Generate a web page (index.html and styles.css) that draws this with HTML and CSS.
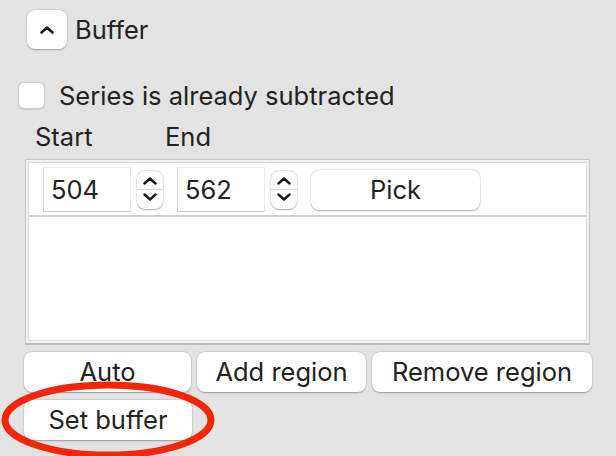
FILE: index.html
```html
<!DOCTYPE html>
<html>
<head>
<meta charset="utf-8">
<link rel="stylesheet" href="styles.css">
</head>
<body>
<div class="panel">
  <div class="disclosure-row">
    <button class="disclosure" aria-label="Collapse">
      <svg width="14" height="8" viewBox="0 0 14 8"><path d="M1.5 6.5 L7 1.5 L12.5 6.5" fill="none" stroke="#1a1a1a" stroke-width="2.6" stroke-linecap="round" stroke-linejoin="round"/></svg>
    </button>
    <span class="title">Buffer</span>
  </div>

  <label class="check-row">
    <span class="checkbox"></span>
    <span class="label">Series is already subtracted</span>
  </label>

  <div class="col-labels">
    <span class="col-start">Start</span>
    <span class="col-end">End</span>
  </div>

  <div class="frame">
    <div class="frame-inner">
      <div class="row">
        <div class="field">504</div>
        <div class="stepper">
          <svg class="chev" width="14" height="8" viewBox="0 0 14 8"><path d="M1.5 6.5 L7 1.5 L12.5 6.5" fill="none" stroke="#1a1a1a" stroke-width="2.4" stroke-linecap="round" stroke-linejoin="round"/></svg>
          <span class="step-sep"></span>
          <svg class="chev" width="14" height="8" viewBox="0 0 14 8"><path d="M1.5 1.5 L7 6.5 L12.5 1.5" fill="none" stroke="#1a1a1a" stroke-width="2.4" stroke-linecap="round" stroke-linejoin="round"/></svg>
        </div>
        <div class="field">562</div>
        <div class="stepper">
          <svg class="chev" width="14" height="8" viewBox="0 0 14 8"><path d="M1.5 6.5 L7 1.5 L12.5 6.5" fill="none" stroke="#1a1a1a" stroke-width="2.4" stroke-linecap="round" stroke-linejoin="round"/></svg>
          <span class="step-sep"></span>
          <svg class="chev" width="14" height="8" viewBox="0 0 14 8"><path d="M1.5 1.5 L7 6.5 L12.5 1.5" fill="none" stroke="#1a1a1a" stroke-width="2.4" stroke-linecap="round" stroke-linejoin="round"/></svg>
        </div>
        <button class="btn pick">Pick</button>
      </div>
    </div>
  </div>

  <div class="actions">
    <button class="btn">Auto</button>
    <button class="btn">Add region</button>
    <button class="btn">Remove region</button>
  </div>

  <div class="set-row">
    <button class="btn set-buffer">Set buffer</button>
  </div>

  <svg class="annotation" width="230" height="90" viewBox="0 0 230 90">
    <ellipse cx="108" cy="42" rx="103" ry="35" fill="none" stroke="#f5250a" stroke-width="7"/>
  </svg>
</div>
</body>
</html>
```

FILE: styles.css
```css
html, body {
  margin: 0;
  padding: 0;
  background: #e3e3e3;
}

body {
  font-family: Inter, "Noto Sans", "Liberation Sans", sans-serif;
  font-size: 25.5px;
  color: #222222;
  width: 616px;
  height: 456px;
  overflow: hidden;
}

.panel {
  position: relative;
  width: 616px;
  height: 456px;
}

button {
  font-family: inherit;
  font-size: inherit;
  color: inherit;
  margin: 0;
  padding: 0;
}

.disclosure-row {
  display: flex;
  align-items: center;
  gap: 8px;
  padding: 10px 0 0 27px;
  height: 39px;
}

.disclosure {
  width: 40px;
  height: 39px;
  border: none;
  border-radius: 8px;
  background: #ffffff;
  box-shadow: 0 0.5px 1.5px rgba(0, 0, 0, 0.28), 0 0 0 0.5px rgba(0, 0, 0, 0.06);
  display: flex;
  align-items: center;
  justify-content: center;
}

.title {
  line-height: 30px;
}

.check-row {
  display: flex;
  align-items: center;
  gap: 14px;
  margin: 33px 0 0 18px;
  height: 27px;
}

.checkbox {
  width: 27px;
  height: 27px;
  box-sizing: border-box;
  border-radius: 6px;
  background: #ffffff;
  border: 1px solid #cfcfcf;
  box-shadow: 0 0.5px 1px rgba(0, 0, 0, 0.12);
}

.label {
  line-height: 30px;
}

.col-labels {
  display: flex;
  height: 30px;
  line-height: 30px;
  margin-top: 13px;
  padding-left: 35px;
}

.col-start {
  width: 130px;
}

.frame {
  margin: 7px 0 0 25px;
  width: 565px;
  height: 186px;
  box-sizing: border-box;
  border: 1px solid #c6c6c6;
  border-bottom: 2px solid #bdbdbd;
  padding: 2px;
  background: #f1f1f1;
}

.frame-inner {
  height: 100%;
  box-sizing: border-box;
  background: #ffffff;
  border: 1px solid #dcdcdc;
}

.row {
  display: flex;
  align-items: center;
  height: 54px;
  box-sizing: border-box;
  border-bottom: 2px solid #cfcfcf;
  padding-left: 14px;
}

.field {
  width: 88px;
  height: 45px;
  box-sizing: border-box;
  border: 1px solid #ececec;
  border-left-color: #d6d6d6;
  border-bottom-color: #c9c9c9;
  padding-left: 7px;
  line-height: 44px;
  background: #ffffff;
}

.stepper {
  width: 26px;
  height: 38px;
  margin: 2px 14px 0 6px;
  border-radius: 8px;
  background: #ffffff;
  box-shadow: 0 0.5px 1.5px rgba(0, 0, 0, 0.3), 0 0 0 0.5px rgba(0, 0, 0, 0.08);
  display: flex;
  flex-direction: column;
  align-items: center;
  justify-content: space-between;
  padding: 6px 0 8px;
  box-sizing: border-box;
}

.step-sep {
  width: 100%;
  height: 1px;
  background: #d8d8d8;
}

.btn {
  border: none;
  border-radius: 8px;
  background: #ffffff;
  height: 40px;
  line-height: 40px;
  box-shadow: 0 0.5px 1.5px rgba(0, 0, 0, 0.3), 0 0 0 0.5px rgba(0, 0, 0, 0.07);
  text-align: center;
}

.pick {
  width: 169px;
  margin-left: 0;
  margin-top: 2px;
}

.actions {
  display: grid;
  grid-template-columns: 167px 169px 220px;
  gap: 6px;
  margin: 7px 0 0 24px;
}

.set-row {
  margin: 8px 0 0 24px;
}

.set-buffer {
  width: 168px;
}

.annotation {
  position: absolute;
  left: 0;
  top: 378px;
  pointer-events: none;
}
```
